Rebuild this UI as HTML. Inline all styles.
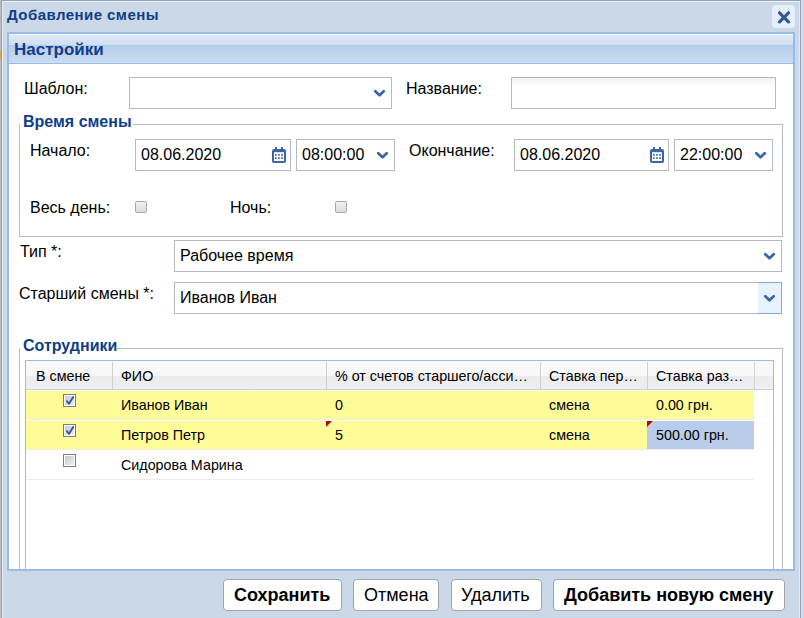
<!DOCTYPE html>
<html><head><meta charset="utf-8">
<style>
html,body{margin:0;padding:0;width:804px;height:618px;overflow:hidden;background:#d6d9de;}
*{box-sizing:border-box;}
.a{position:absolute;}
.t{position:absolute;font-family:"Liberation Sans",sans-serif;white-space:nowrap;line-height:1;color:#000;}
.lbl{font-size:16px;}
.fld{position:absolute;border:1px solid #b5b8c8;background:#fff;}
.fld.tx{background:linear-gradient(#eef0f2 0,#fff 9px);}
.chev{position:absolute;width:13px;height:9px;}
.hd{font-size:14.3px;}
.cb{position:absolute;width:12px;height:12px;border:1px solid #a9a9a9;border-radius:2px;background:linear-gradient(#f1f1f1,#dcdcdc);}
.gcb{position:absolute;width:13px;height:13px;border:1px solid #787c88;background:#fff;}
.gcb i{position:absolute;left:1px;top:1px;width:9px;height:9px;background:linear-gradient(135deg,#c9cbd2,#eceef0);}
.btn{position:absolute;top:579px;height:32px;border:1px solid #a3a3a3;border-radius:4px;background:#fff;}
</style></head>
<body>
<!-- left page strip -->
<div class="a" style="left:0;top:0;width:1px;height:618px;background:#b9bcc0"></div>
<div class="a" style="left:0;top:50px;width:1px;height:10px;background:#d2a56a"></div>
<!-- window -->
<div class="a" style="left:1px;top:0;width:800px;height:640px;background:#cbd8e7;border:1px solid #8fa3bf;"></div>
<div class="a" style="left:2px;top:1px;width:798px;height:1px;background:#eef3f8"></div>
<div class="a" style="left:2px;top:1px;width:1px;height:617px;background:#e3eaf3"></div>
<div class="a" style="left:799px;top:1px;width:1px;height:617px;background:#e3eaf3"></div>

<div class="t" style="left:7px;top:7px;font-size:15px;letter-spacing:0.45px;font-weight:bold;color:#0f3d8a">Добавление смены</div>
<!-- close -->
<div class="a" style="left:772px;top:5px;width:23px;height:23px;border-radius:4px;background:#e6f0fc"></div>
<svg class="a" style="left:772px;top:5px" width="23" height="23" viewBox="0 0 23 23"><path d="M7.5 7.8 L16.5 16.8 M16.5 7.8 L7.5 16.8" stroke="#35598e" stroke-width="3.2" stroke-linecap="round"/></svg>

<!-- panel -->
<div class="a" style="left:7px;top:32px;width:788px;height:539px;border:2px solid #99bbe8;background:#fff"></div>
<div class="a" style="left:9px;top:34px;width:784px;height:30px;background:linear-gradient(#f4f8fc 0,#f4f8fc 1px,#dde8f5 1px,#d0def1 11px,#acc7e8 11px,#b8ceec 12px,#cbdbf1 29px);border-bottom:1px solid #99bbe8"></div>
<div class="t" style="left:14px;top:41px;font-size:17px;font-weight:bold;color:#0f3d8a">Настройки</div>

<!-- row 1 -->
<div class="t lbl" style="left:24px;top:81px">Шаблон:</div>
<div class="fld" style="left:129px;top:77px;width:263px;height:32px"></div>
<svg class="chev" style="left:373px;top:89px" viewBox="0 0 13 9"><path d="M2.3 2.3 L6.5 6.3 L10.7 2.3" fill="none" stroke="#3a67a9" stroke-width="2.8" stroke-linecap="round" stroke-linejoin="round"/></svg>
<div class="t lbl" style="left:406px;top:81px">Название:</div>
<div class="fld tx" style="left:511px;top:77px;width:265px;height:32px"></div>

<!-- fieldset время -->
<div class="a" style="left:19px;top:124px;width:764px;height:113px;border:1px solid #b5b8c8"></div>
<div class="a" style="left:20px;top:110px;width:113px;height:20px;background:#fff"></div>
<div class="t" style="left:23px;top:114px;font-size:16px;font-weight:bold;color:#0f3d8a">Время смены</div>

<div class="t lbl" style="left:30px;top:143px">Начало:</div>
<div class="fld" style="left:135px;top:139px;width:156px;height:32px"></div>
<div class="t lbl" style="left:141px;top:147px">08.06.2020</div>
<svg class="a" style="left:272px;top:147px" width="14" height="16" viewBox="0 0 14 16"><rect x="0" y="2" width="14" height="14" rx="2" fill="#3a66a8"/><rect x="2" y="5.2" width="10" height="8.8" fill="#fff"/><rect x="3" y="0" width="2" height="3" fill="#3a66a8"/><rect x="9" y="0" width="2" height="3" fill="#3a66a8"/><g fill="#3a66a8"><rect x="3" y="7" width="1.7" height="1.7"/><rect x="6.1" y="7" width="1.7" height="1.7"/><rect x="9.2" y="7" width="1.7" height="1.7"/><rect x="3" y="10.2" width="1.7" height="1.7"/><rect x="6.1" y="10.2" width="1.7" height="1.7"/><rect x="9.2" y="10.2" width="1.7" height="1.7"/></g></svg>
<div class="fld" style="left:296px;top:139px;width:99px;height:32px"></div>
<div class="t lbl" style="left:302px;top:147px">08:00:00</div>
<svg class="chev" style="left:376px;top:151px" viewBox="0 0 13 9"><path d="M2.3 2.3 L6.5 6.3 L10.7 2.3" fill="none" stroke="#3a67a9" stroke-width="2.8" stroke-linecap="round" stroke-linejoin="round"/></svg>

<div class="t lbl" style="left:409px;top:143px">Окончание:</div>
<div class="fld" style="left:514px;top:139px;width:155px;height:32px"></div>
<div class="t lbl" style="left:520px;top:147px">08.06.2020</div>
<svg class="a" style="left:650px;top:147px" width="14" height="16" viewBox="0 0 14 16"><rect x="0" y="2" width="14" height="14" rx="2" fill="#3a66a8"/><rect x="2" y="5.2" width="10" height="8.8" fill="#fff"/><rect x="3" y="0" width="2" height="3" fill="#3a66a8"/><rect x="9" y="0" width="2" height="3" fill="#3a66a8"/><g fill="#3a66a8"><rect x="3" y="7" width="1.7" height="1.7"/><rect x="6.1" y="7" width="1.7" height="1.7"/><rect x="9.2" y="7" width="1.7" height="1.7"/><rect x="3" y="10.2" width="1.7" height="1.7"/><rect x="6.1" y="10.2" width="1.7" height="1.7"/><rect x="9.2" y="10.2" width="1.7" height="1.7"/></g></svg>
<div class="fld" style="left:674px;top:139px;width:99px;height:32px"></div>
<div class="t lbl" style="left:680px;top:147px">22:00:00</div>
<svg class="chev" style="left:754px;top:151px" viewBox="0 0 13 9"><path d="M2.3 2.3 L6.5 6.3 L10.7 2.3" fill="none" stroke="#3a67a9" stroke-width="2.8" stroke-linecap="round" stroke-linejoin="round"/></svg>

<div class="t lbl" style="left:30px;top:200px">Весь день:</div>
<div class="cb" style="left:135px;top:201px"></div>
<div class="t lbl" style="left:230px;top:200px">Ночь:</div>
<div class="cb" style="left:335px;top:201px"></div>

<!-- Тип -->
<div class="t lbl" style="left:20px;top:244px">Тип *:</div>
<div class="fld" style="left:174px;top:240px;width:608px;height:32px"></div>
<div class="t lbl" style="left:180px;top:248px">Рабочее время</div>
<svg class="chev" style="left:763px;top:252px" viewBox="0 0 13 9"><path d="M2.3 2.3 L6.5 6.3 L10.7 2.3" fill="none" stroke="#3a67a9" stroke-width="2.8" stroke-linecap="round" stroke-linejoin="round"/></svg>

<div class="t lbl" style="left:19px;top:286px">Старший смены *:</div>
<div class="fld" style="left:174px;top:282px;width:608px;height:32px"></div>
<div class="a" style="left:758px;top:282px;width:24px;height:32px;background:#e8f2fd;border:1px solid #7eaee0;border-left:none;"></div>
<div class="t lbl" style="left:180px;top:290px">Иванов Иван</div>
<svg class="chev" style="left:763px;top:294px" viewBox="0 0 13 9"><path d="M2.3 2.3 L6.5 6.3 L10.7 2.3" fill="none" stroke="#3a67a9" stroke-width="2.8" stroke-linecap="round" stroke-linejoin="round"/></svg>

<!-- fieldset сотрудники -->
<div class="a" style="left:19px;top:348px;width:764px;height:221px;border:1px solid #b5b8c8;border-bottom:none"></div>
<div class="a" style="left:20px;top:334px;width:97px;height:20px;background:#fff"></div>
<div class="t" style="left:23px;top:338px;font-size:16px;font-weight:bold;color:#0f3d8a">Сотрудники</div>

<!-- grid -->
<div class="a" style="left:25px;top:360px;width:749px;height:209px;border:1px solid #99bbe8;border-bottom:none;background:#fff"></div>
<div class="a" style="left:26px;top:361px;width:747px;height:29px;background:linear-gradient(#f9f9f9 0,#f7f7f8 15px,#ebecef 15px,#eeeff1 100%);border-bottom:1px solid #d0d0d0"></div>
<div class="a" style="left:112px;top:362px;width:1px;height:27px;background:#d0d0d0"></div>
<div class="a" style="left:326px;top:362px;width:1px;height:27px;background:#d0d0d0"></div>
<div class="a" style="left:540px;top:362px;width:1px;height:27px;background:#d0d0d0"></div>
<div class="a" style="left:647px;top:362px;width:1px;height:27px;background:#d0d0d0"></div>
<div class="a" style="left:754px;top:362px;width:1px;height:27px;background:#d0d0d0"></div>
<div class="t hd" style="left:36px;top:369px">В смене</div>
<div class="t hd" style="left:121px;top:369px">ФИО</div>
<div class="t hd" style="left:335px;top:369px">% от счетов старшего/асси…</div>
<div class="t hd" style="left:549px;top:369px">Ставка пер…</div>
<div class="t hd" style="left:656px;top:369px">Ставка раз…</div>

<!-- rows -->
<div class="a" style="left:26px;top:390px;width:728px;height:30px;border-top:1px solid #fff;border-bottom:1px solid #ededed;background:#fffd98"></div>
<div class="a" style="left:26px;top:420px;width:728px;height:30px;border-top:1px solid #fff;border-bottom:1px solid #ededed;background:#fffd98"></div>
<div class="a" style="left:647px;top:421px;width:107px;height:28px;background:#b9cdeb"></div>
<div class="a" style="left:26px;top:450px;width:728px;height:30px;border-top:1px solid #fff;border-bottom:1px solid #ededed;background:#fff"></div>

<div class="gcb" style="left:63px;top:394px"><i></i><svg class="a" style="left:1px;top:0" width="11" height="11" viewBox="0 0 11 11"><path d="M1.9 6.2 L4 8.8 L8.2 2" fill="none" stroke="#3b55a6" stroke-width="1.9" stroke-linecap="round" stroke-linejoin="round"/></svg></div>
<div class="gcb" style="left:63px;top:424px"><i></i><svg class="a" style="left:1px;top:0" width="11" height="11" viewBox="0 0 11 11"><path d="M1.9 6.2 L4 8.8 L8.2 2" fill="none" stroke="#3b55a6" stroke-width="1.9" stroke-linecap="round" stroke-linejoin="round"/></svg></div>
<div class="gcb" style="left:63px;top:454px"><i></i></div>

<div class="t hd" style="left:121px;top:398px">Иванов Иван</div>
<div class="t hd" style="left:335px;top:398px">0</div>
<div class="t hd" style="left:549px;top:398px">смена</div>
<div class="t hd" style="left:656px;top:398px">0.00 грн.</div>

<div class="t hd" style="left:121px;top:428px">Петров Петр</div>
<div class="t hd" style="left:335px;top:428px">5</div>
<div class="t hd" style="left:549px;top:428px">смена</div>
<div class="t hd" style="left:656px;top:428px">500.00 грн.</div>
<svg class="a" style="left:326px;top:421px" width="6" height="6"><path d="M0 0H6L0 6Z" fill="#c00000"/></svg>
<svg class="a" style="left:647px;top:421px" width="6" height="6"><path d="M0 0H6L0 6Z" fill="#c00000"/></svg>

<div class="t hd" style="left:121px;top:458px">Сидорова Марина</div>

<!-- buttons -->
<div class="btn" style="left:223px;width:119px"></div>
<div class="t" style="left:234px;top:586px;font-size:18px;font-weight:bold">Сохранить</div>
<div class="btn" style="left:353px;width:86px"></div>
<div class="t" style="left:364px;top:586px;font-size:18px">Отмена</div>
<div class="btn" style="left:451px;width:91px"></div>
<div class="t" style="left:461px;top:586px;font-size:18px">Удалить</div>
<div class="btn" style="left:553px;width:232px"></div>
<div class="t" style="left:564px;top:586px;font-size:18px;font-weight:bold">Добавить новую смену</div>
</body></html>
